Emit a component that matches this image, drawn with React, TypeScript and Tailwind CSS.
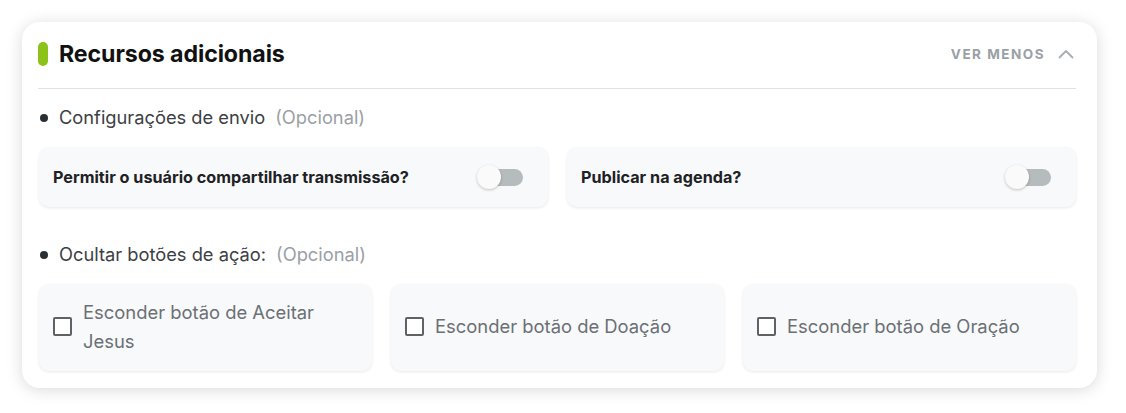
// Additional resources panel: send settings toggles + hidden action buttons

const FONT = "font-['Inter','Liberation_Sans',sans-serif]";

function Toggle() {
  return (
    <div className="relative w-[46px] h-[24px] flex items-center">
      <div className="absolute right-0 w-[34px] h-[17px] rounded-full bg-[#b6bbbe]" />
      <div className="relative w-[24px] h-[24px] rounded-full bg-[#fafafa] shadow-[0_1px_3px_rgba(0,0,0,0.22)]" />
    </div>
  );
}

function ToggleCard({ label }: { label: string }) {
  return (
    <div className="flex-1 h-[60px] flex items-center justify-between pl-[14px] pr-[25px] rounded-[10px] bg-[#f8f9fa] shadow-[0_1px_3px_rgba(0,0,0,0.09)]">
      <span className="text-[16.2px] font-bold text-[#202124]">{label}</span>
      <Toggle />
    </div>
  );
}

function CheckCard({ label }: { label: string }) {
  return (
    <div className="flex-1 h-[87px] flex items-center gap-[11px] pl-[14px] pr-[14px] pb-[2px] rounded-[10px] bg-[#f8f9fa] shadow-[0_1px_3px_rgba(0,0,0,0.09)]">
      <div className="w-[19px] h-[19px] shrink-0 rounded-[2px] border-2 border-[#5f6368] bg-white" />
      <span className="text-[18.4px] leading-[29px] text-[#6b7075]">{label}</span>
    </div>
  );
}

function SectionTitle({ text }: { text: string }) {
  return (
    <div className="flex items-center h-[24px] pl-[2px]">
      <span className="w-[8px] h-[8px] rounded-full bg-[#2a2f33]" />
      <span className="ml-[11px] text-[18.3px] text-[#3c4043]">{text}</span>
      <span className="ml-[10px] text-[18.3px] text-[#9aa0a6]">(Opcional)</span>
    </div>
  );
}

export default function App() {
  return (
    <div className={`min-h-screen bg-white pt-[22px] pl-[22px] ${FONT}`}>
      <div className="w-[1075px] h-[366px] rounded-[18px] bg-white shadow-[0_2px_16px_rgba(0,0,0,0.15)] pt-[20px] pl-[16px] pr-[21px]">
        {/* Header */}
        <div className="flex items-center justify-between h-[24px]">
          <div className="flex items-center">
            <span className="w-[10px] h-[24px] rounded-full bg-[#8cc21a]" />
            <h2 className="ml-[11px] text-[23.2px] font-bold text-[#111] tracking-[-0.1px]">
              Recursos adicionais
            </h2>
          </div>
          <button className="flex items-center gap-[13px] pr-[2px] text-[13.5px] font-bold tracking-[1.5px] text-[#9aa0a6]">
            VER MENOS
            <svg width="16" height="10" viewBox="0 0 16 10" fill="none">
              <path d="M1.5 8.5L8 2L14.5 8.5" stroke="#a9aeb2" strokeWidth="1.8" strokeLinecap="round" strokeLinejoin="round" />
            </svg>
          </button>
        </div>

        <div className="mt-[22px] h-px bg-[#dfe3e6]" />

        <div className="mt-[17px]">
          <SectionTitle text="Configurações de envio" />
        </div>
        <div className="mt-[17px] flex gap-[19px] pl-[1px]">
          <ToggleCard label="Permitir o usuário compartilhar transmissão?" />
          <ToggleCard label="Publicar na agenda?" />
        </div>

        <div className="mt-[36px]">
          <SectionTitle text="Ocultar botões de ação:" />
        </div>
        <div className="mt-[17px] flex gap-[19px] pl-[1px]">
          <CheckCard label="Esconder botão de Aceitar Jesus" />
          <CheckCard label="Esconder botão de Doação" />
          <CheckCard label="Esconder botão de Oração" />
        </div>
      </div>
    </div>
  );
}
